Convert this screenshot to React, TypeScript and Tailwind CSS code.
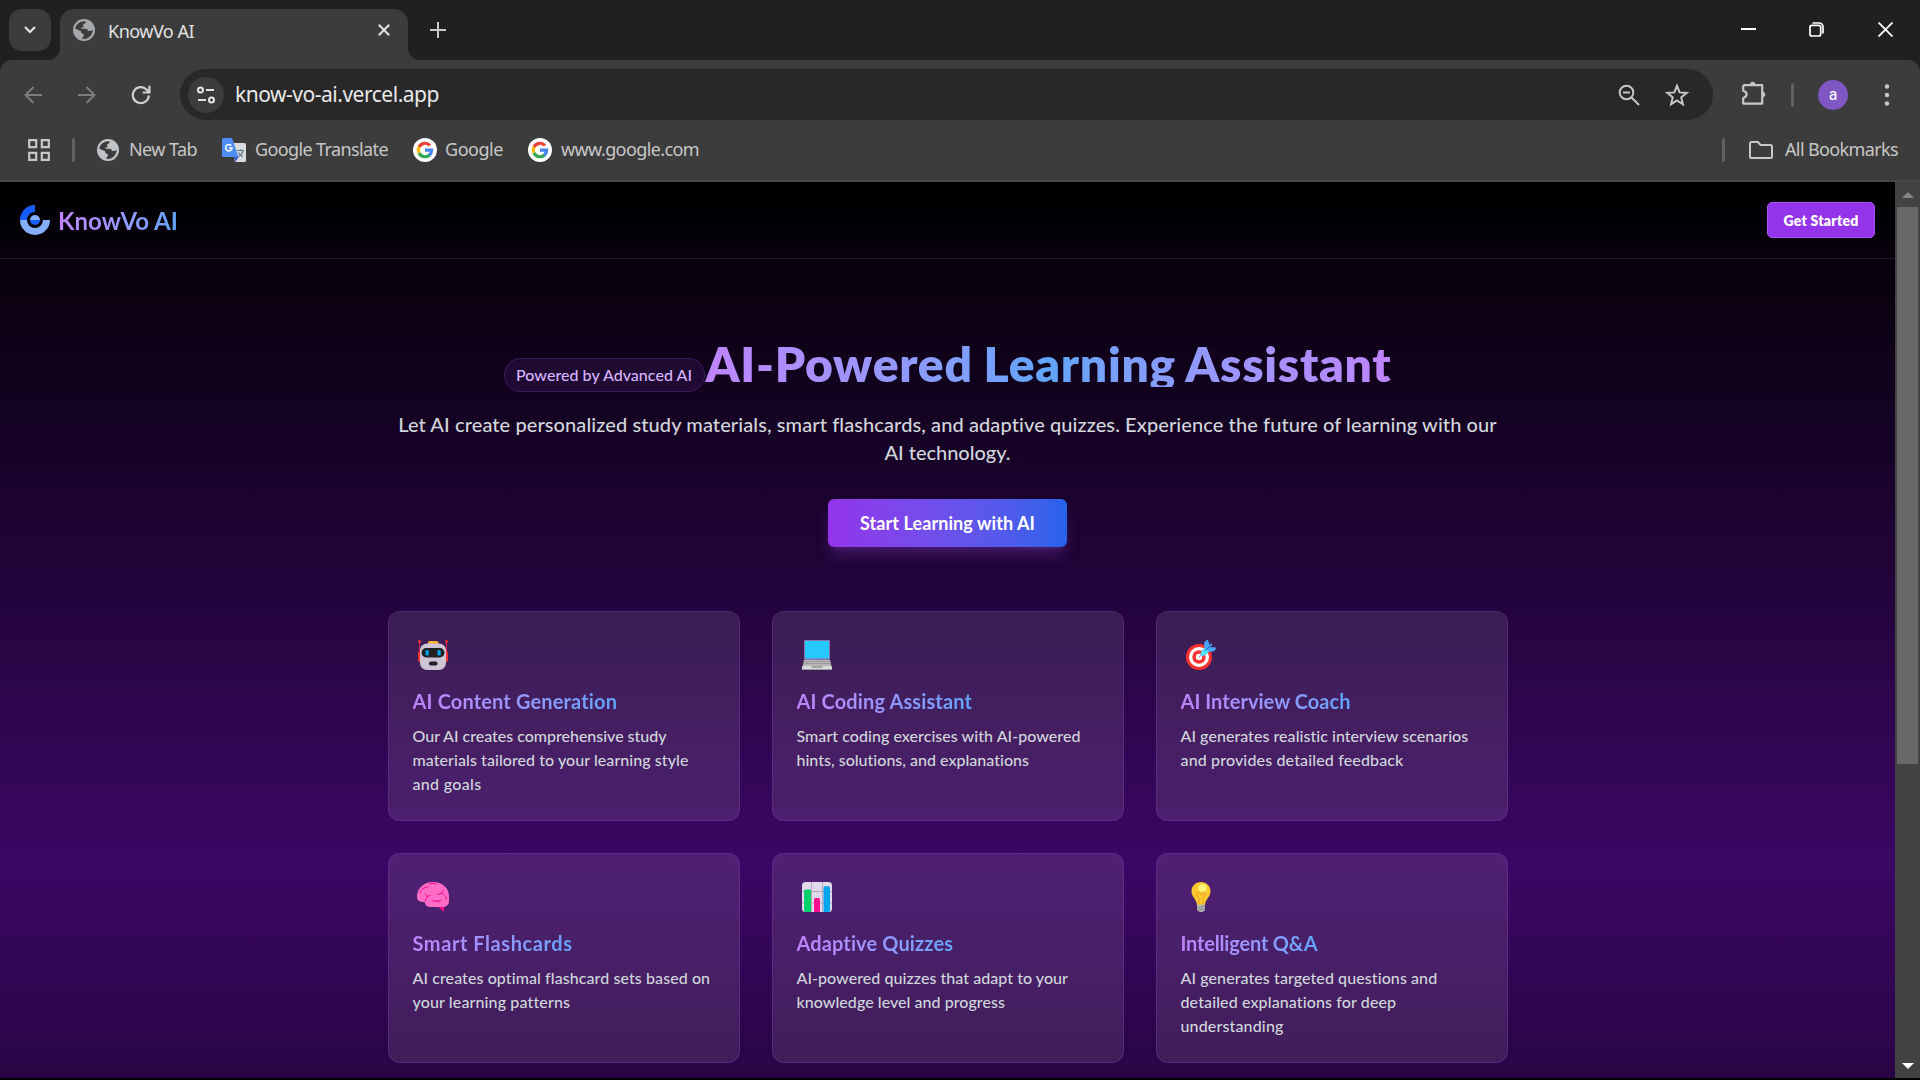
import React, { useLayoutEffect, useRef, useState } from "react";

/* Inline text whose tracking is computed so the run fills a given width. */
function Fit({ w, className = "", children }: { w: number; className?: string; children: string }) {
  const ref = useRef<HTMLSpanElement>(null);
  const [ls, setLs] = useState(0);
  useLayoutEffect(() => {
    const el = ref.current;
    if (el) setLs((w - el.getBoundingClientRect().width) / children.length);
  }, []);
  return (
    <span ref={ref} className={"inline-block whitespace-nowrap " + className} style={{ letterSpacing: ls }}>
      {children}
    </span>
  );
}

const Globe = () => (
  <svg viewBox="0 0 22 22" className="size-[22px] shrink-0">
    <circle cx="11" cy="11" r="11" fill="#c0c4c8" />
    <path d="M10.5 2.2 13 2.6c-.3 1.4-1 2-2.2 2.4-.8.3-.6 1.3-.3 2 .3.9-.5 1.500-1.300 1.500-1 0-1 .6-.8 1.300h4c1.600 0 2.400.8 2.500 2.200h2c.8 0 1.500-.4 2.700-1.200A8.900 8.900 0 0 1 9.300 19.800c-.2-1.500.4-2 1.500-2.400v-2.500c-1.600 0-2.700-.8-2.800-2.600L2.200 9.600A9 9 0 0 1 10.500 2.200Z" fill="#3c3c3c" />
    <path d="M13 2.400c3 .8 5.700 3.400 6.500 6.600-1.500 1-3.500 1-4.500.2-.7-.6-.6-1.700-1.500-2.200-1-.6-1-1.500-.4-2.200z" fill="#c0c4c8" />
  </svg>
);

const GoogleG = () => (
  <svg viewBox="0 0 24 24" className="size-6 shrink-0">
    <circle cx="12" cy="12" r="12" fill="#fff" />
    <g fill="none" strokeWidth="3.200">
      <path d="M17 7.500A6.700 6.700 0 0 0 6 9" stroke="#ea4335" />
      <path d="M6 9a6.700 6.700 0 0 0 0 6" stroke="#fbbc04" />
      <path d="M6 15a6.700 6.700 0 0 0 10.500 2" stroke="#34a853" />
      <path d="M16.300 17.200A6.500 6.500 0 0 0 18.600 12.200H12" stroke="#4285f4" />
    </g>
  </svg>
);

const Translate = () => (
  <svg viewBox="0 0 24 24" className="size-6 shrink-0">
    <path d="M9 5h13.500A1.500 1.500 0 0 1 24 6.500v16a1.500 1.500 0 0 1-1.500 1.500H13z" fill="#dadce0" />
    <path d="M15 12.500h7M18.500 11v1.500M21 12.500c-.6 3-2.500 5-4.500 6M16.500 14.500c1 2 2.500 3.500 4.500 4" stroke="#5f7780" strokeWidth="1.200" fill="none" />
    <path d="m12 19 5 0-4 5z" fill="#3759c7" />
    <path d="M1.500 0H10l6.500 19h-15A1.500 1.500 0 0 1 0 17.500v-16A1.500 1.500 0 0 1 1.500 0Z" fill="#4f8df5" />
    <path d="M9.300 7.600a3.200 3.200 0 1 0 .8 2.400H7" stroke="#fff" strokeWidth="1.500" fill="none" />
  </svg>
);

const Logo = () => (
  <svg viewBox="0 0 30 30" className="size-[30px] shrink-0">
    <path d="M0 15A15 15 0 0 1 15 0v7a8 8 0 0 0-8 8z" fill="#155dfc" />
    <path d="M0 15h7a8 8 0 0 0 16 0h7a15 15 0 0 1-30 0z" fill="#86aeff" />
    <path d="M10 15a5 5 0 0 1 10 0z" fill="#86aeff" />
    <path d="M10 15a5 5 0 0 0 10 0z" fill="#155dfc" />
  </svg>
);

const Robot = () => (
  <svg viewBox="0 0 32 32" className="size-8">
    <path d="M2.500 2v13M29.500 2v13" stroke="#d3264a" strokeWidth="1" />
    <circle cx="2.500" cy="2.500" r="1.500" fill="#f8312f" /><circle cx="29.500" cy="2.500" r="1.500" fill="#f8312f" />
    <rect x="1" y="12" width="4" height="11" rx="2" fill="#f8312f" /><rect x="27" y="12" width="4" height="11" rx="2" fill="#f8312f" />
    <rect x="11" y="2" width="10.500" height="5" rx="1.500" fill="#ffb02e" />
    <rect x="3" y="4.500" width="26" height="26.500" rx="7" fill="#cdc4d6" />
    <rect x="4.500" y="9" width="23" height="9.500" rx="4.700" fill="#212121" />
    <rect x="8.500" y="11" width="3.200" height="5.500" rx="1.200" fill="#00a6ed" /><rect x="20.500" y="11" width="3.200" height="5.500" rx="1.200" fill="#00a6ed" />
    <rect x="12" y="22.500" width="8.500" height="4" rx="1.800" fill="#212121" />
  </svg>
);
const Laptop = () => (
  <svg viewBox="0 0 32 32" className="size-8">
    <rect x="3" y="1" width="26" height="20" rx="1" fill="#8c6fae" />
    <rect x="4" y="2" width="24" height="17.500" fill="#26c9fc" />
    <path d="M3 21h26l2 9H1z" fill="#b8b8b8" />
    <path d="M3.500 22.500h25M3.200 24.500h25.800" stroke="#8b8b8b" strokeWidth="1" strokeDasharray="1.500 .7" />
    <path d="M1.400 27h29.200l.6 3.500H.8z" fill="#d9d9d9" />
    <path d="M10.500 27h11v1.800h-11z" fill="#9b9b9b" />
    <path d="M1 30.500h30" stroke="#9b9b9b" />
  </svg>
);
const Target = () => (
  <svg viewBox="0 0 32 32" className="size-8">
    <circle cx="14" cy="18" r="13" fill="#f8312f" /><circle cx="14" cy="18" r="10" fill="#fff" />
    <circle cx="14" cy="18" r="6.700" fill="#f8312f" /><circle cx="14" cy="18" r="3.200" fill="#fff" />
    <path d="M14 18l2-1.500" stroke="#8d65c5" strokeWidth="1" />
    <path d="M16 16.500C15 14 17 11 19.500 9L19 4.500C19.500 2.500 21.500.8 23 1l1.500 5 2-2 .5 2-2 2 5.800.5c.5 2-1 3.500-3 4L23.500 13c-2 2.500-5 4.500-7.500 3.500z" fill="#46a4fb" />
    <path d="M16 16.500C15 14.500 17 11.500 20 9l3.500 3.500c-2 2.800-5 5-7.500 4z" fill="#50e2ff" />
    <path d="M20 12l5-5" stroke="#0074ba" strokeWidth="1" />
  </svg>
);
const Brain = () => (
  <svg viewBox="0 0 32 32" className="size-8">
    <path d="M20.500 25h6.500v6z" fill="#f70a8d" />
    <path d="M0 16C0 7 7 1 16 1s16 6 16 14v5c0 4-3 6-7 6H14c-4 0-6-2-6.500-5C3 21 0 20 0 16Z" fill="#ff6dc6" />
    <path d="M3 12c1-4 4-5.500 8-6M12.500 3c2-1 5-1 7 0M8 13c1.500.3 2.500 1.500 2 3.500-.4 1.500-1.800 2-1.800 3.500M10 15.500l3-1M26 9c0 2.500-1.500 4-5.500 4.500M24 12c2 .5 4.500 2 5.500 6M15 20c4-.5 6 0 7 1.500M19 20.500l5-1.500" stroke="#f70a8d" strokeWidth="1" fill="none" strokeLinecap="round" />
  </svg>
);
const Chart = () => (
  <svg viewBox="0 0 32 32" className="size-8">
    <rect x="1" y="1" width="30" height="30" rx="3.500" fill="#e1d8ec" />
    <path d="M10.500 1v30M21.500 1v30M1 10.500h30M1 22h30" stroke="#b4acbc" strokeWidth="1" />
    <path d="M3 10a1.500 1.500 0 0 1 1.500-1.500h4A1.500 1.500 0 0 1 10 10v21H4.500L3 30z" fill="#00d26a" />
    <path d="M13 18.500a1.500 1.500 0 0 1 1.500-1.500h3a1.500 1.500 0 0 1 1.500 1.500V31h-6z" fill="#fc0f8d" />
    <path d="M22.500 6.500A1.500 1.500 0 0 1 24 5.200h3.500A1.500 1.500 0 0 1 29 6.700V30l-1.500 1h-5z" fill="#00a6ed" />
  </svg>
);
const Bulb = () => (
  <svg viewBox="0 0 32 32" className="size-8">
    <path d="M12 23h8v5c0 2-2 3-4 3s-4-1-4-3z" fill="#b9b9b9" />
    <path d="M16 1c5.500 0 9.500 4 9.500 9.200 0 6-5 7.800-5.500 13.300h-8C11.500 18 6.500 16 6.500 10.200 6.500 5 10.500 1 16 1Z" fill="#fcc92f" />
    <path d="M14 23.500V17c-2-1.500-2.500-3-2-5 .5-1.200 1.500-1 2 0 1 1.500 3 1.500 4 0 .5-1 1.500-1.200 2 0 .5 2 0 3.500-2 5v6.500" stroke="#f59d2a" strokeWidth="1" fill="none" />
    <ellipse cx="17.500" cy="7" rx="4.200" ry="4" fill="#fff478" />
    <path d="m12 27 8-2M12.500 29.500l7.500-2" stroke="#858585" strokeWidth="1" />
  </svg>
);

type Card = { icon: () => React.JSX.Element; title: [string, number]; lines: [string, number][] };
const cards: Card[] = [
  { icon: Robot, title: ["AI Content Generation", 205], lines: [["Our AI creates comprehensive study", 254], ["materials tailored to your learning style", 276], ["and goals", 69]] },
  { icon: Laptop, title: ["AI Coding Assistant", 175.5], lines: [["Smart coding exercises with AI-powered", 284], ["hints, solutions, and explanations", 233]] },
  { icon: Target, title: ["AI Interview Coach", 170], lines: [["AI generates realistic interview scenarios", 288], ["and provides detailed feedback", 223]] },
  { icon: Brain, title: ["Smart Flashcards", 160], lines: [["AI creates optimal flashcard sets based on", 298], ["your learning patterns", 157]] },
  { icon: Chart, title: ["Adaptive Quizzes", 157], lines: [["AI-powered quizzes that adapt to your", 271.5], ["knowledge level and progress", 208.5]] },
  { icon: Bulb, title: ["Intelligent Q&A", 137], lines: [["AI generates targeted questions and", 257], ["detailed explanations for deep", 216], ["understanding", 103]] },
];

function TabStrip() {
  return (
    <div className="flex h-[60px] bg-[#1f2120] pt-[9px] pl-[9px]">
      <button className="flex size-[42px] items-center justify-center rounded-[13px] bg-[#3c3c3c]">
        <svg viewBox="0 0 12 8" className="h-2 w-3" fill="none" stroke="#e3e3e3" strokeWidth="2.200"><path d="m1 1 5 5 5-5" /></svg>
      </button>
      <svg viewBox="0 0 12 12" className="-ml-[3px] size-3 self-end" fill="#3c3c3c"><path d="M12 0v12H0A12 12 0 0 0 12 0Z" /></svg>
      <div className="flex w-[348px] items-center rounded-t-[14px] bg-[#3c3c3c] pr-[18px] pb-[9px] pl-[13px]">
        <div className="opacity-80"><Globe /></div>
        <Fit w={86} className="mt-[2px] ml-[13px] text-[18px] text-[#e3e3e3]">KnowVo AI</Fit>
        <svg viewBox="0 0 12 12" className="ml-auto size-3" fill="none" stroke="#e3e3e3" strokeWidth="2"><path d="m.8.8 10.400 10.400M11.200.8.8 11.200" /></svg>
      </div>
      <svg viewBox="0 0 12 12" className="size-3 self-end" fill="#3c3c3c"><path d="M0 0v12h12A12 12 0 0 1 0 0Z" /></svg>
      <svg viewBox="0 0 16 16" className="mt-[13px] ml-[10px] size-4" fill="none" stroke="#c7c7c7" strokeWidth="2"><path d="M8 0v16M0 8h16" /></svg>
      <div className="mt-[13px] mr-[27px] ml-auto flex">
        <svg viewBox="0 0 15 15" className="size-[15px]" stroke="#fff" strokeWidth="2"><path d="M0 7h15" /></svg>
        <svg viewBox="0 0 15 15" className="ml-[53px] size-[15px]" fill="none" stroke="#fff" strokeWidth="1.700"><rect x="1" y="3.300" width="10.700" height="10.700" rx="2" /><path d="M3.500 1H10a4 4 0 0 1 4 4v6.500" /></svg>
        <svg viewBox="0 0 15 15" className="ml-[54px] size-[15px]" stroke="#fff" strokeWidth="1.800"><path d="m.5.500 14 14M14.500.5l-14 14" /></svg>
      </div>
    </div>
  );
}

function AddressBar() {
  return (
    <div className="flex h-[69px] items-center rounded-t-[12px] bg-[#3c3c3c] pt-[9px] pb-[9px]">
      <svg viewBox="0 0 18 18" className="ml-6 size-[18px]" fill="none" stroke="#7d7d7d" strokeWidth="2"><path d="M18 9H1.500M9.500 1l-8 8 8 8" /></svg>
      <svg viewBox="0 0 18 18" className="ml-9 size-[18px]" fill="none" stroke="#7d7d7d" strokeWidth="2"><path d="M0 9h16.500M8.500 1l8 8-8 8" /></svg>
      <svg viewBox="0 0 20 20" className="ml-[35px] size-5" fill="none" stroke="#d0d0d0" strokeWidth="2.200"><path d="M17.800 10.500A8 8 0 1 1 15.500 4.500l2.500 2.500M18.400.8v6.700h-6.700" /></svg>
      <div className="ml-[29px] flex h-[51px] w-[1533px] items-center rounded-full bg-[#282828] pr-6 pl-2">
        <div className="flex size-9 items-center justify-center rounded-full bg-[#3c3c3c]">
          <svg viewBox="0 0 18 18" className="size-[18px]" fill="none" stroke="#e3e3e3" strokeWidth="2"><circle cx="3.500" cy="4" r="2.500" /><path d="M9 4h8M1 14h8" /><circle cx="14.500" cy="14" r="2.500" /></svg>
        </div>
        <Fit w={204} className="ml-[11px] text-[21px] text-[#e8e8e8]">know-vo-ai.vercel.app</Fit>
        <svg viewBox="0 0 22 22" className="ml-auto size-[22px]" fill="none" stroke="#c7c7c7" strokeWidth="2"><circle cx="8.500" cy="8.500" r="6.800" /><path d="m13.500 13.500 7.500 7.500M5 8.500h7" /></svg>
        <svg viewBox="0 0 24 24" className="ml-[25px] size-6" fill="none" stroke="#c7c7c7" strokeWidth="2"><path d="m12 2.800 2.600 6.600 7 .5-5.400 4.500 1.700 6.900L12 17.500l-5.900 3.800 1.700-6.900L2.400 9.900l7-.5z" /></svg>
      </div>
      <svg viewBox="0 0 24 24" className="-mt-[3px] ml-[29px] size-6" fill="none" stroke="#c7c7c7" strokeWidth="2.200" strokeLinejoin="round"><path d="M1.200 4.200h19v6.500M1.200 4.200v5.600c4.500 1 4.500 6 0 7.200v5.600h19v-5.600" /><path d="M20.200 10v7.500" /><path d="M8 3.500a2.700 2.700 0 0 1 5.400 0zM20.500 10.800a2.700 2.700 0 0 1 0 5.400z" fill="#c7c7c7" stroke="none" /></svg>
      <div className="ml-[25px] h-6 w-[3px] rounded-full bg-[#626262]" />
      <div className="ml-6 flex size-[30px] items-center justify-center rounded-full bg-[#7e57c2] font-['Roboto'] text-[16px] text-white">a</div>
      <svg viewBox="0 0 6 22" className="ml-9 h-[22px] w-1.5" fill="#c7c7c7"><circle cx="3" cy="2.500" r="2.200" /><circle cx="3" cy="11" r="2.200" /><circle cx="3" cy="19.500" r="2.200" /></svg>
    </div>
  );
}

function Bookmarks() {
  return (
    <div className="flex h-[53px] items-center border-b-2 border-[#474747] bg-[#3c3c3c] pr-[22px] pb-[9px] pl-7 text-[18px] text-[#c7c7c7]">
      <svg viewBox="0 0 22 22" className="size-[22px]" fill="none" stroke="#c7c7c7" strokeWidth="2.200"><path d="M1.200 1.200h7v7h-7zM13.800 1.200h7v7h-7zM1.200 13.800h7v7h-7zM13.800 13.800h7v7h-7z" /></svg>
      <div className="mr-[22px] ml-[22px] h-6 w-[3px] rounded-full bg-[#626262]" />
      <Globe /><Fit w={68} className="-mt-0.5 mr-[25px] ml-[10px]">New Tab</Fit>
      <Translate /><Fit w={133} className="-mt-0.5 mr-[25px] ml-[9px]">Google Translate</Fit>
      <GoogleG /><Fit w={58} className="-mt-0.5 mr-[25px] ml-2">Google</Fit>
      <GoogleG /><Fit w={138} className="-mt-0.5 ml-[9px]">www.google.com</Fit>
      <div className="ml-auto h-6 w-[3px] rounded-full bg-[#626262]" />
      <svg viewBox="0 0 24 18" className="ml-6 h-[18px] w-6" fill="none" stroke="#c7c7c7" strokeWidth="2"><path d="M1 2.500Q1 1 2.500 1H9l2.500 3h10Q23 4 23 5.500v10q0 1.500-1.500 1.500h-19Q1 17 1 15.500z" /></svg>
      <Fit w={113} className="-mt-0.5 ml-3">All Bookmarks</Fit>
    </div>
  );
}

function FeatureCard({ card }: { card: Card }) {
  const Icon = card.icon;
  return (
    <div className="h-[210px] rounded-[12px] border border-[#a855f7]/20 bg-white/10 px-6 pt-[27px]">
      <div className="ml-1"><Icon /></div>
      <h3 className="mt-4 h-7 text-[20px] leading-7 font-bold">
        <Fit w={card.title[1]} className="bg-linear-to-r from-[#c084fc] to-[#60a5fa] bg-clip-text text-transparent">{card.title[0]}</Fit>
      </h3>
      <p className="mt-[9px] text-[16px] leading-6 font-medium text-[#d1d5dc]">
        {card.lines.map(([text, w]) => (
          <span key={text} className="block"><Fit w={w}>{text}</Fit></span>
        ))}
      </p>
    </div>
  );
}

export default function App() {
  return (
    <div className="flex h-[1080px] w-[1920px] flex-col overflow-hidden bg-black font-['Noto_Sans',sans-serif]">
      <TabStrip />
      <div className="bg-[#1f2120]"><AddressBar /></div>
      <Bookmarks />
      <div className="flex h-[896px]">
        <main className="h-[896px] w-[1895px] overflow-hidden font-['Lato',sans-serif]">
          <div className="h-[1364px] bg-[linear-gradient(to_bottom,#000,#3b0764,#000)]">
            <header className="flex h-[77px] items-center justify-between border-b border-[#a855f7]/20 pr-5 pl-5">
              <div className="flex items-center gap-2">
                <Logo />
                <Fit w={120} className="mt-px bg-linear-to-r from-[#c084fc] to-[#60a5fa] bg-clip-text text-[24px] leading-8 font-bold text-transparent">KnowVo AI</Fit>
              </div>
              <button className="h-9 w-[108px] rounded-[5px] border border-[#a855f7] bg-[#9333ea] text-[14px] font-extrabold text-white">
                <Fit w={75}>Get Started</Fit>
              </button>
            </header>
            <section className="flex flex-col items-center">
              <div className="mt-[80px] flex h-[53px] items-start">
                <div className="mt-[19px] flex h-[34px] w-[201px] items-center justify-center rounded-full border border-[#a855f7]/20 bg-[#a855f7]/10 text-[16px] font-medium text-[#d8b4fe]">
                  <Fit w={176}>Powered by Advanced AI</Fit>
                </div>
                <h1 className="text-[48px] leading-[50px] font-extrabold">
                  <Fit w={687} className="h-12 bg-linear-to-r from-[#c084fc] via-[#60a5fa] to-[#c084fc] bg-clip-text pl-px text-transparent [word-spacing:-1px]">AI-Powered Learning Assistant</Fit>
                </h1>
              </div>
              <p className="mt-[18px] flex flex-col items-center text-[20px] leading-7 font-medium text-[#d1d5dc]">
                <Fit w={1099}>Let AI create personalized study materials, smart flashcards, and adaptive quizzes. Experience the future of learning with our</Fit>
                <Fit w={126}>AI technology.</Fit>
              </p>
              <button className="mt-[33px] h-12 w-[239px] rounded-[6px] bg-linear-to-r from-[#9333ea] to-[#2563eb] text-[18px] font-bold text-white shadow-[0_10px_15px_-3px_#a855f740,0_4px_6px_-4px_#a855f740]">
                <Fit w={175}>Start Learning with AI</Fit>
              </button>
              <div className="mt-16 grid w-[1120px] grid-cols-3 gap-8">
                {cards.map((c) => <FeatureCard key={c.title[0]} card={c} />)}
              </div>
            </section>
          </div>
        </main>
        <aside className="flex w-[25px] flex-col items-center bg-[#424242]">
          <svg viewBox="0 0 12 6" className="mt-[10px] h-1.5 w-3" fill="#858585"><path d="m6 0 6 6H0z" /></svg>
          <div className="mt-[9px] h-[557px] w-[21px] bg-[#686868]" />
          <svg viewBox="0 0 12 6" className="mt-auto mb-[9px] h-1.5 w-3" fill="#fff"><path d="M0 0h12L6 6z" /></svg>
        </aside>
      </div>
    </div>
  );
}
